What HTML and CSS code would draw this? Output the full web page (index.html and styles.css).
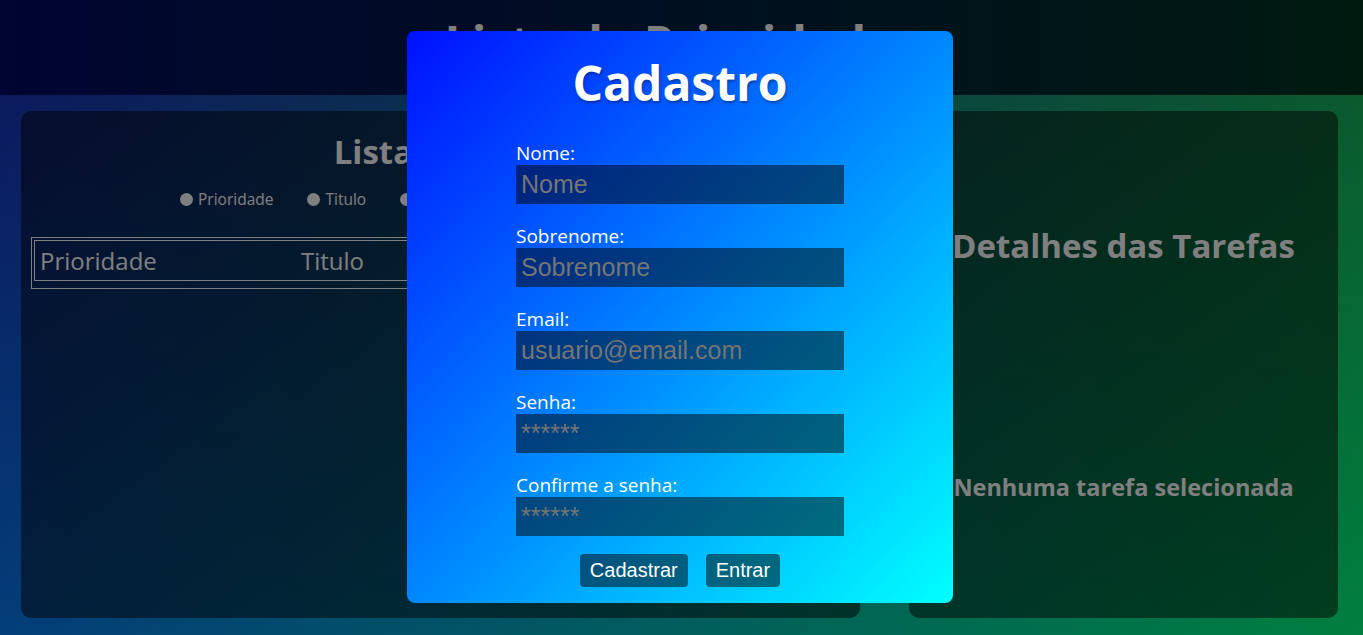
FILE: index.html
```html
<!DOCTYPE html>
<html lang="pt-BR">
<head>
<meta charset="utf-8">
<title>Lista de Prioridades</title>
<link rel="stylesheet" href="styles.css">
</head>
<body>
<header class="topo">
  <h1 class="topo-titulo">Lista de Prioridades</h1>
</header>
<main class="conteudo">
  <section class="painel painel-lista">
    <h2 class="painel-titulo lista-titulo">Lista de Tarefas</h2>
    <div class="ordenacao">
      <label class="opcao"><input type="radio" name="ordem" class="radio">Prioridade</label>
      <label class="opcao"><input type="radio" name="ordem" class="radio">Titulo</label>
      <label class="opcao"><input type="radio" name="ordem" class="radio">Data</label>
    </div>
    <table class="tabela">
      <thead>
        <tr><th class="col-prioridade">Prioridade</th><th class="col-titulo">Titulo</th><th>Data</th></tr>
      </thead>
    </table>
  </section>
  <section class="painel painel-detalhes">
    <h2 class="painel-titulo detalhes-titulo">Detalhes das Tarefas</h2>
    <p class="vazio">Nenhuma tarefa selecionada</p>
  </section>
</main>
<div class="sobreposicao">
  <div class="modal">
    <h2 class="modal-titulo">Cadastro</h2>
    <form class="formulario">
      <label class="campo"><span class="rotulo">Nome:</span><input class="entrada" type="text" placeholder="Nome"></label>
      <label class="campo"><span class="rotulo">Sobrenome:</span><input class="entrada" type="text" placeholder="Sobrenome"></label>
      <label class="campo"><span class="rotulo">Email:</span><input class="entrada" type="email" placeholder="usuario@email.com"></label>
      <label class="campo"><span class="rotulo">Senha:</span><input class="entrada" type="password" placeholder="******"></label>
      <label class="campo"><span class="rotulo">Confirme a senha:</span><input class="entrada" type="password" placeholder="******"></label>
      <div class="acoes">
        <button type="button" class="botao">Cadastrar</button>
        <button type="button" class="botao">Entrar</button>
      </div>
    </form>
  </div>
</div>
</body>
</html>
```
FILE: styles.css
```css
* { box-sizing: border-box; }

html, body {
  margin: 0;
  height: 100%;
}

body {
  font-family: "Open Sans", "Noto Sans", sans-serif;
  color: #ffffff;
  overflow: hidden;
  background: #02143a;
}

/* ---------- header ---------- */
.topo {
  height: 95px;
  padding-top: 10px;
  background: linear-gradient(to right, #000a62, #003420);
  display: flex;
  justify-content: center;
}

.topo-titulo {
  margin: 0;
  font-size: 48px;
  font-weight: 700;
  line-height: normal;
}

/* ---------- main area ---------- */
.conteudo {
  position: relative;
  height: 540px;
  display: grid;
  grid-template-columns: 839px 429px;
  column-gap: 49px;
  padding: 16px 25px 17px 21px;
  background: linear-gradient(to right, #087cf4, #00ff80);
}

.conteudo::before {
  content: "";
  position: absolute;
  inset: 0;
  background: linear-gradient(to right, #1834bc, #16b45c);
  -webkit-mask-image: linear-gradient(to bottom, #000 0%, transparent 100%);
  mask-image: linear-gradient(to bottom, #000 0%, transparent 100%);
}

.painel {
  position: relative;
  z-index: 1;
  background: rgba(0, 0, 0, 0.5);
  border-radius: 10px;
}

.painel-titulo {
  margin: 0;
  font-size: 33px;
  font-weight: 700;
  line-height: normal;
  text-align: center;
}

/* left panel */
.painel-lista {
  padding: 0 10px;
}

.lista-titulo {
  margin-top: 18px;
  margin-bottom: 15px;
  padding-left: 46px;
}

.ordenacao {
  display: flex;
  gap: 34px;
  padding-left: 149px;
  font-size: 15.5px;
  line-height: 20px;
}

.opcao {
  display: flex;
  align-items: center;
  gap: 5px;
}

.radio {
  appearance: none;
  -webkit-appearance: none;
  margin: 0;
  width: 13px;
  height: 13px;
  border-radius: 50%;
  background: #ffffff;
}

.tabela {
  width: 100%;
  margin-top: 28px;
  border: 1px solid #ffffff;
  border-spacing: 0;
  padding: 2px 2px 7px;
}

.tabela th {
  border-top: 1px solid #ffffff;
  border-bottom: 1px solid #ffffff;
  padding: 2px 5px;
  font-size: 24px;
  font-weight: 400;
  line-height: 35px;
  text-align: left;
}

.tabela th:first-child { border-left: 1px solid #ffffff; }
.tabela th:last-child { border-right: 1px solid #ffffff; }

.col-prioridade { width: 262px; }
.col-titulo { width: 260px; }

/* right panel */
.detalhes-titulo {
  margin-top: 112px;
}

.vazio {
  margin: 203px 0 0;
  font-size: 23.5px;
  font-weight: 700;
  text-align: center;
  line-height: normal;
}

/* ---------- modal ---------- */
.sobreposicao {
  position: fixed;
  inset: 0;
  z-index: 10;
  background: rgba(0, 0, 0, 0.5);
  display: flex;
  align-items: flex-start;
  justify-content: center;
  padding: 31px 3px 0 0;
}

.modal {
  width: 546px;
  padding: 21px 109px 16px;
  border-radius: 8px;
  background: linear-gradient(to bottom right, #0010ff, #00ffff);
}

.modal-titulo {
  margin: 0 0 28px;
  font-size: 48px;
  font-weight: 700;
  line-height: 62px;
  text-align: center;
  text-shadow: 1px 2px 3px rgba(0, 0, 0, 0.35);
}

.formulario {
  display: flex;
  flex-direction: column;
  gap: 21px;
}

.campo {
  display: flex;
  flex-direction: column;
}

.rotulo {
  font-size: 19px;
  line-height: 23px;
}

.entrada {
  width: 328px;
  height: 39px;
  padding: 5px;
  border: none;
  outline: none;
  background: rgba(0, 0, 0, 0.5);
  color: #ffffff;
  font-family: "Liberation Sans", Arial, sans-serif;
  font-size: 25px;
}

.entrada::placeholder {
  color: #757575;
}

.acoes {
  display: flex;
  justify-content: center;
  gap: 18px;
  margin-top: -3px;
}

.botao {
  padding: 5px 10px;
  border: none;
  border-radius: 4px;
  background: rgba(0, 0, 0, 0.5);
  color: #ffffff;
  font-family: "Liberation Sans", Arial, sans-serif;
  font-size: 20px;
  line-height: 23px;
}
```
